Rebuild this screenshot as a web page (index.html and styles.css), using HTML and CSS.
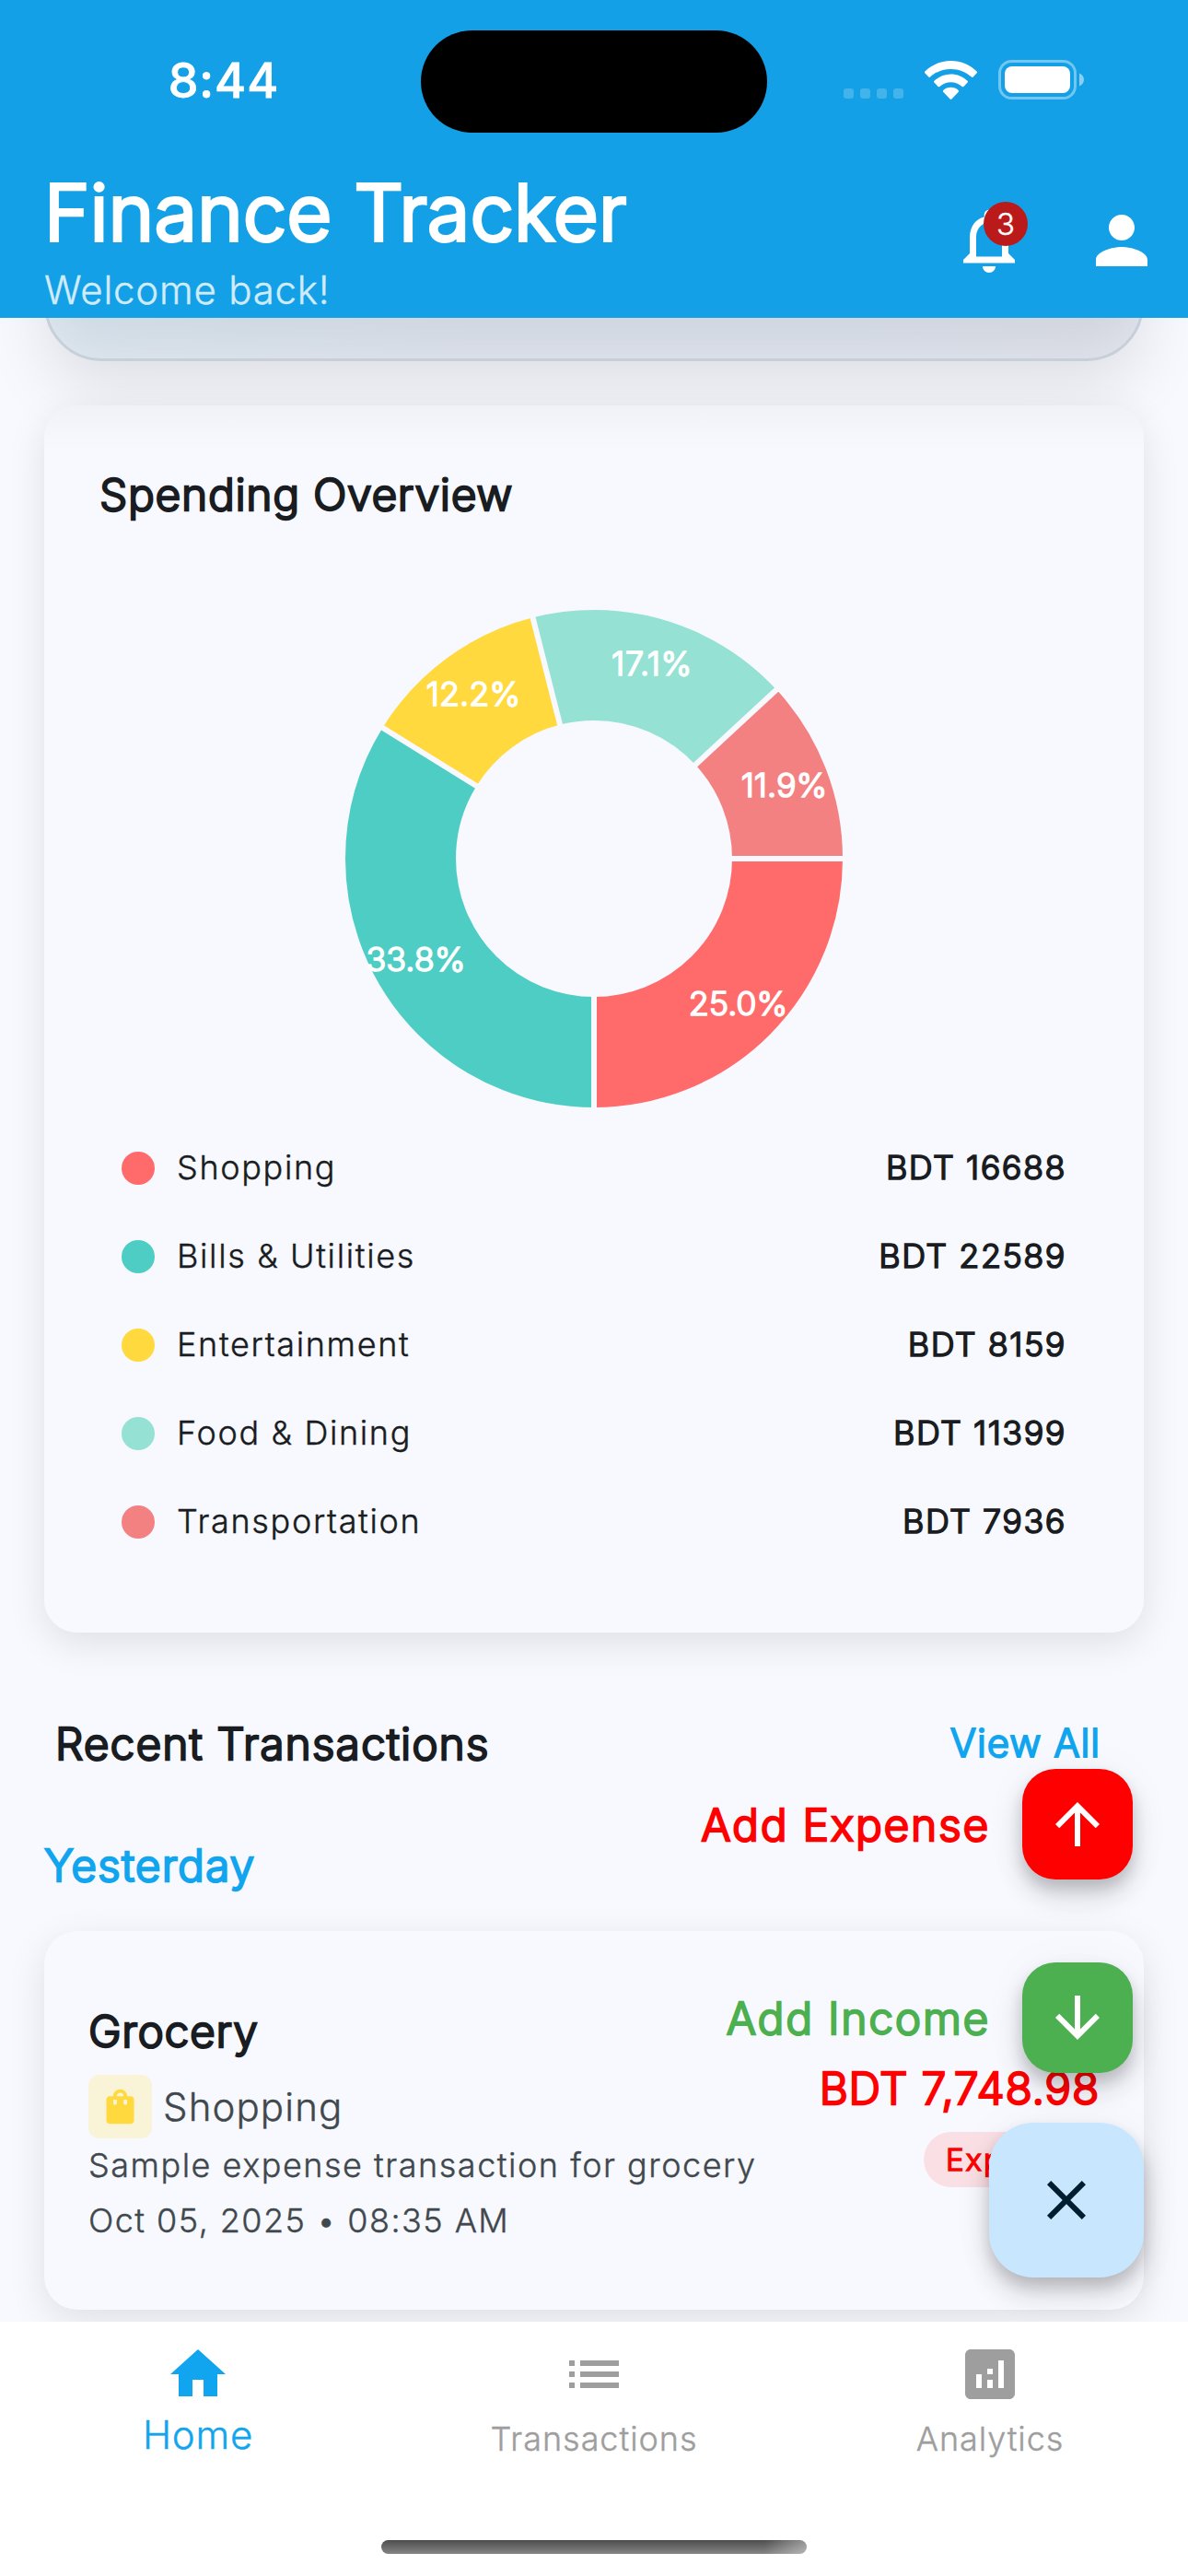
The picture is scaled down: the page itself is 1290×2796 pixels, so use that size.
FILE: index.html
```html
<!DOCTYPE html>
<html lang="en">
<head>
<meta charset="utf-8">
<title>Finance Tracker</title>
<link rel="stylesheet" href="styles.css">
</head>
<body>
<div class="app">
  <header class="header">
    <div class="status">
      <div class="status-time">8:44</div>
      <div class="island"></div>
      <div class="status-icons">
        <div class="cell"><i></i><i></i><i></i><i></i></div>
        <svg class="wifi" viewBox="0 0 57 42">
          <path d="M28.500 0C39.500 0 49.500 4.300 56.600 11.500c.6.6.6 1.200.1 1.800l-4 4.200c-.6.6-1.200.6-1.800 0C45 12 37.200 8.900 28.500 8.900S12 12 6.100 17.500c-.6.600-1.200.6-1.800 0l-4-4.200c-.5-.6-.5-1.200.1-1.800C7.500 4.300 17.500 0 28.500 0z"/>
          <path d="M28.500 14.500c6.900 0 13.300 2.700 18 7.300.6.600.6 1.200.1 1.800l-4.200 4.300c-.6.6-1.200.6-1.800 0-3.300-3-7.500-4.700-12.100-4.700s-8.800 1.700-12.100 4.700c-.6.6-1.200.6-1.800 0l-4.200-4.300c-.5-.6-.5-1.200.1-1.800 4.700-4.600 11.100-7.300 18-7.300z"/>
          <path d="M28.500 28.800c3.100 0 6 1.200 8.200 3.100.6.5.6 1.200.1 1.800l-7.400 7.800c-.6.6-1.200.6-1.800 0l-7.400-7.800c-.5-.6-.5-1.300.1-1.800 2.200-1.900 5.100-3.100 8.200-3.100z"/>
        </svg>
        <svg class="battery" viewBox="0 0 93 43">
          <rect class="battery-case" x="1.500" y="1.500" width="82" height="40" rx="13"/>
          <rect class="battery-fill" x="7" y="7" width="71" height="29" rx="8"/>
          <path class="battery-nub" d="M88 14.500c3 1.200 5 3.900 5 7s-2 5.800-5 7z"/>
        </svg>
      </div>
    </div>
    <div class="appbar">
      <div class="titles">
        <h1 class="bold">Finance Tracker</h1>
        <p>Welcome back!</p>
      </div>
      <div class="actions">
        <div class="bell">
          <svg viewBox="0 0 24 24"><path d="M12 22c1.100 0 2-.9 2-2h-4c0 1.100.89 2 2 2zm6-6v-5c0-3.070-1.630-5.640-4.500-6.320V4c0-.83-.67-1.500-1.500-1.500s-1.500.67-1.500 1.500v.68C7.640 5.360 6 7.920 6 11v5l-2 2v1h16v-1l-2-2zm-2 1H8v-6c0-2.480 1.510-4.500 4-4.500s4 2.020 4 4.500v6z"/></svg>
          <span class="badge">3</span>
        </div>
        <svg viewBox="0 0 24 24"><path d="M12 12c2.210 0 4-1.790 4-4s-1.790-4-4-4-4 1.790-4 4 1.790 4 4 4zm0 2c-2.670 0-8 1.340-8 4v2h16v-2c0-2.660-5.330-4-8-4z"/></svg>
      </div>
    </div>
  </header>

  <main class="content">
    <section class="balance"></section>

    <section class="card spending">
      <h2 class="bold">Spending Overview</h2>
      <svg class="donut" viewBox="0 0 540 540">
        <g class="slices">
          <circle class="shopping" cx="270" cy="270" r="210" pathLength="66771" stroke-dasharray="16688 50083"/>
          <circle class="bills" cx="270" cy="270" r="210" pathLength="66771" stroke-dasharray="22589 44182" stroke-dashoffset="-16688"/>
          <circle class="fun" cx="270" cy="270" r="210" pathLength="66771" stroke-dasharray="8159 58612" stroke-dashoffset="-39277"/>
          <circle class="food" cx="270" cy="270" r="210" pathLength="66771" stroke-dasharray="11399 55372" stroke-dashoffset="-47436"/>
          <circle class="transport" cx="270" cy="270" r="210" pathLength="66771" stroke-dasharray="7936 58835" stroke-dashoffset="-58835"/>
        </g>
        <g class="gaps">
          <path d="M415 270h130"/>
          <path d="M415 270h130" transform="rotate(90 270 270)"/>
          <path d="M415 270h130" transform="rotate(211.760 270 270)"/>
          <path d="M415 270h130" transform="rotate(255.750 270 270)"/>
          <path d="M415 270h130" transform="rotate(317.210 270 270)"/>
        </g>
        <g class="labels">
          <text x="426.500" y="440">25.0%</text>
          <text x="76.500" y="392">33.8%</text>
          <text x="139" y="104">12.2%</text>
          <text class="wide" x="333" y="71">17.1%</text>
          <text x="476.500" y="203">11.9%</text>
        </g>
      </svg>
      <ul class="legend">
        <li><i class="dot shopping"></i><span>Shopping</span><b class="bold">BDT 16688</b></li>
        <li><i class="dot bills"></i><span>Bills &amp; Utilities</span><b class="bold">BDT 22589</b></li>
        <li><i class="dot fun"></i><span>Entertainment</span><b class="bold">BDT 8159</b></li>
        <li><i class="dot food"></i><span>Food &amp; Dining</span><b class="bold">BDT 11399</b></li>
        <li><i class="dot transport"></i><span>Transportation</span><b class="bold">BDT 7936</b></li>
      </ul>
    </section>

    <div class="section-head">
      <h2 class="bold recent">Recent Transactions</h2>
      <a class="bold view-all">View All</a>
    </div>
    <h3 class="bold day">Yesterday</h3>

    <article class="card transaction">
      <div class="details">
        <h4 class="bold">Grocery</h4>
        <div class="category">
          <span class="category-icon">
            <svg viewBox="0 0 24 24"><path d="M18 6h-2c0-2.210-1.790-4-4-4S8 3.790 8 6H6c-1.100 0-2 .9-2 2v12c0 1.100.9 2 2 2h12c1.100 0 2-.9 2-2V8c0-1.100-.9-2-2-2zm-8 4c0 .55-.45 1-1 1s-1-.45-1-1V8h2v2zm2-6c1.100 0 2 .9 2 2h-4c0-1.100.9-2 2-2zm4 6c0 .55-.45 1-1 1s-1-.45-1-1V8h2v2z"/></svg>
          </span>
          <span>Shopping</span>
        </div>
        <p class="note">Sample expense transaction for grocery</p>
        <p class="date">Oct 05, 2025 • 08:35 AM</p>
      </div>
      <div class="amount">
        <strong class="bold">BDT 7,748.98</strong>
        <span class="tag bold">Expense</span>
      </div>
    </article>
  </main>

  <nav class="tabs">
    <a class="tab active">
      <svg viewBox="0 0 24 24"><path d="M10 20v-6h4v6h5v-8h3L12 3 2 12h3v8z"/></svg>
      <span>Home</span>
    </a>
    <a class="tab">
      <svg viewBox="0 0 24 24"><path d="M3 13h2v-2H3v2zm0 4h2v-2H3v2zm0-8h2V7H3v2zm4 4h14v-2H7v2zm0 4h14v-2H7v2zM7 7v2h14V7H7z"/></svg>
      <span>Transactions</span>
    </a>
    <a class="tab">
      <svg viewBox="0 0 24 24"><path d="M19 3H5c-1.100 0-2 .9-2 2v14c0 1.100.9 2 2 2h14c1.100 0 2-.9 2-2V5c0-1.100-.9-2-2-2zM9 17H7v-5h2v5zm4 0h-2v-3h2v3zm0-5h-2v-2h2v2zm4 5h-2V7h2v10z"/></svg>
      <span>Analytics</span>
    </a>
    <div class="home-indicator"></div>
  </nav>

  <div class="fab-menu">
    <div class="fab-row expense">
      <span class="bold">Add Expense</span>
      <button><svg viewBox="0 0 24 24"><path d="M4 12l1.410 1.410L11 7.830V20h2V7.830l5.580 5.590L20 12l-8-8-8 8z"/></svg></button>
    </div>
    <div class="fab-row income">
      <span class="bold">Add Income</span>
      <button><svg viewBox="0 0 24 24"><path d="M20 12l-1.410-1.410L13 16.170V4h-2v12.170l-5.580-5.590L4 12l8 8 8-8z"/></svg></button>
    </div>
    <button class="fab-main"><svg viewBox="0 0 24 24"><path d="M19 6.410L17.590 5 12 10.590 6.410 5 5 6.410 10.590 12 5 17.590 6.410 19 12 13.410 17.590 19 19 17.590 13.410 12z"/></svg></button>
  </div>
</div>
</body>
</html>
```
FILE: styles.css
```css
:root {
  --page: #f8f9ff;
  --header: #14a0e6;
  --accent: #10a5ee;
  --ink: #191c20;
  --muted: #41484d;
  --shopping: #ff6b6b;
  --bills: #4ecdc4;
  --fun: #ffd93d;
  --food: #95e1d3;
  --transport: #f38181;
}

* { box-sizing: border-box; margin: 0; padding: 0; }

body {
  font-family: Inter, "Liberation Sans", sans-serif;
  font-weight: 300;
  -webkit-text-stroke: 0.4px currentColor;
  color: var(--ink);
  background: var(--page);
}

svg { display: block; fill: currentColor; }
i { font-style: normal; }
ul { list-style: none; }
button { border: 0; font: inherit; }

/* Semi-bold look made by thickening the light weight */
.bold {
  font-weight: 300;
  -webkit-text-stroke: 0.047em currentColor;
}

.app {
  position: relative;
  width: 1290px;
  height: 2796px;
  display: flex;
  flex-direction: column;
  overflow: hidden;
}

/* Header */
.header {
  height: 345px;
  flex: none;
  background: var(--header);
  color: #fff;
  position: relative;
  z-index: 1;
}
.status {
  height: 177px;
  display: grid;
  grid-template-columns: 457px 376px 457px;
  align-items: center;
}
.status-time {
  font-size: 52px;
  font-weight: 500;
  letter-spacing: 1px;
  line-height: 60px;
  padding: 0 0 1px 29px;
  text-align: center;
  -webkit-text-stroke: 0.8px currentColor;
}
.island { height: 111px; border-radius: 56px; background: #000; }
.status-icons {
  display: flex;
  align-items: center;
  justify-content: flex-end;
  margin-top: -4px;
  padding-right: 113px;
  height: 43px;
}
.cell { display: flex; gap: 7px; margin-right: 23px; align-self: flex-end; padding-bottom: 1px; }
.cell i { width: 11px; height: 11px; border-radius: 3px; background: rgba(255, 255, 255, 0.2); }
.wifi { width: 57px; height: 42px; margin-right: 23px; }
.battery { width: 93px; height: 43px; }
.battery-case { fill: none; stroke: rgba(255, 255, 255, 0.4); stroke-width: 3; }
.battery-nub { fill: rgba(255, 255, 255, 0.5); }

.appbar {
  height: 168px;
  display: flex;
  justify-content: space-between;
  padding: 0 30px 0 48px;
}
.titles { padding-top: 4px; }
.titles h1 { font-size: 84px; line-height: 100px; letter-spacing: 0.4px; }
.titles p {
  margin-top: 10px;
  font-size: 42px;
  line-height: 48px;
  letter-spacing: 0.8px;
  color: #d0ecfa;
}
.actions { display: flex; align-items: center; gap: 60px; }
.actions svg { width: 84px; height: 84px; }
.bell { position: relative; }
.badge {
  position: absolute;
  top: 0;
  right: 0;
  width: 48px;
  height: 48px;
  border-radius: 50%;
  background: #ba1a1a;
  font-size: 33px;
  line-height: 48px;
  text-align: center;
}

/* Scrolling content */
.content { height: 2175px; flex: none; overflow: hidden; }

.balance {
  height: 200px;
  margin: -153px 48px 0;
  border: 3px solid #c7d0d9;
  border-radius: 62px;
  background: linear-gradient(100deg, #cfdde6, #d1d7e1 40%, #d1d7e1 75%, #d3d6de);
  box-shadow: 0 30px 70px rgba(0, 0, 0, 0.1), inset 0 -6px 48px rgba(232, 235, 243, 0.7);
}

.card {
  margin: 0 48px;
  border-radius: 36px;
  background: var(--page);
  box-shadow: 0 12px 42px rgba(0, 0, 0, 0.1);
}

.spending {
  height: 1332px;
  margin-top: 48px;
  padding: 60px 60px 72px;
  background: linear-gradient(#f1f2f7, var(--page) 50px);
}
.spending h2 { font-size: 48px; line-height: 73px; letter-spacing: 0.65px; }

.donut { width: 540px; height: 540px; margin: 89px auto 18px; }
.slices circle { fill: none; stroke-width: 120; }
.slices .shopping { stroke: var(--shopping); }
.slices .bills { stroke: var(--bills); }
.slices .fun { stroke: var(--fun); }
.slices .food { stroke: var(--food); }
.slices .transport { stroke: var(--transport); }
.gaps path { stroke: var(--page); stroke-width: 6; }
.labels text {
  font-size: 36px;
  text-anchor: middle;
  fill: #fff;
  stroke: #fff;
  stroke-width: 1.7;
}
.labels .wide { letter-spacing: 0.6px; }

.legend li {
  height: 96px;
  display: flex;
  align-items: center;
  padding: 0 24px;
  font-size: 36px;
}
.legend span { flex: 1; padding-bottom: 2px; letter-spacing: 1.65px; }
.legend b { padding-bottom: 2px; letter-spacing: 1.5px; }
.dot { width: 36px; height: 36px; margin-right: 24px; border-radius: 50%; }
.dot.shopping { background: var(--shopping); }
.dot.bills { background: var(--bills); }
.dot.fun { background: var(--fun); }
.dot.food { background: var(--food); }
.dot.transport { background: var(--transport); }

.section-head {
  display: flex;
  align-items: center;
  justify-content: space-between;
  height: 96px;
  margin-top: 72px;
  padding: 0 95px 0 60px;
}
.recent { font-size: 48px; letter-spacing: 0.98px; }
.view-all { padding-bottom: 1px; font-size: 42px; letter-spacing: 0.95px; color: var(--accent); }
.day {
  margin: 49px 48px 35px;
  font-size: 48px;
  line-height: 72px;
  letter-spacing: 1px;
  color: var(--accent);
}

.transaction {
  height: 411px;
  display: flex;
  justify-content: space-between;
  padding: 0 48px;
}
.details { padding-top: 73px; color: var(--muted); }
.details h4 { font-size: 48px; line-height: 72px; letter-spacing: 0.67px; color: var(--ink); }
.category {
  display: flex;
  align-items: center;
  gap: 12px;
  margin-top: 11px;
  font-size: 42px;
  letter-spacing: 1.1px;
}
.category-icon { padding: 12px; border-radius: 12px; background: #f9f3d7; color: var(--fun); }
.category-icon svg { width: 45px; height: 45px; }
.note { margin-top: 2px; font-size: 36px; line-height: 54px; letter-spacing: 1.51px; }
.date { margin-top: 6px; font-size: 36px; line-height: 54px; letter-spacing: 1.45px; }
.amount {
  display: flex;
  flex-direction: column;
  align-items: flex-end;
  padding-top: 135px;
  color: #f00;
}
.amount strong { font-size: 48px; line-height: 72px; letter-spacing: 0.72px; }
.tag {
  width: 191px;
  margin-top: 11px;
  padding-left: 24px;
  border-radius: 30px;
  background: #fae0e4;
  font-size: 33px;
  line-height: 60px;
  letter-spacing: 1.9px;
}

/* Bottom navigation */
.tabs {
  position: relative;
  height: 276px;
  flex: none;
  display: grid;
  grid-template-columns: repeat(3, 1fr);
  background: #fff;
}
.tab {
  display: flex;
  flex-direction: column;
  align-items: center;
  gap: 10px;
  padding-top: 21px;
  color: #9e9e9e;
  font-size: 36px;
  line-height: 48px;
  letter-spacing: 0.95px;
}
.tab svg { width: 72px; height: 72px; }
.tab.active { gap: 6px; color: var(--accent); font-size: 42px; letter-spacing: 0.8px; }
.home-indicator {
  position: absolute;
  left: 414px;
  bottom: 24px;
  width: 462px;
  height: 15px;
  border-radius: 8px;
  background: linear-gradient(90deg, transparent 90%, rgba(255, 255, 255, 0.4)), linear-gradient(#4d4d4d, #858585);
}

/* Floating action menu over the list */
.fab-menu {
  position: absolute;
  top: 1920px;
  right: 48px;
  z-index: 2;
  display: flex;
  flex-direction: column;
  align-items: flex-end;
}
.fab-row {
  display: flex;
  align-items: center;
  gap: 35px;
  margin: 0 12px 90px 0;
  font-size: 48px;
  letter-spacing: 1.7px;
}
.fab-row.income { margin-bottom: 54px; }
.fab-menu button {
  display: grid;
  place-items: center;
  box-shadow: 0 9px 15px rgba(0, 0, 0, 0.14), 0 18px 30px rgba(0, 0, 0, 0.14), 0 3px 54px rgba(0, 0, 0, 0.04);
}
.fab-menu svg { width: 72px; height: 72px; }
.fab-row button { width: 120px; height: 120px; border-radius: 36px; color: #fff; }
.expense { color: #f00; }
.expense button { background: #f00; }
.income { color: #4caf50; }
.income button { background: #4caf50; }
.fab-menu .fab-main { width: 168px; height: 168px; border-radius: 48px; background: #c9e6ff; color: #001e2f; }
```
